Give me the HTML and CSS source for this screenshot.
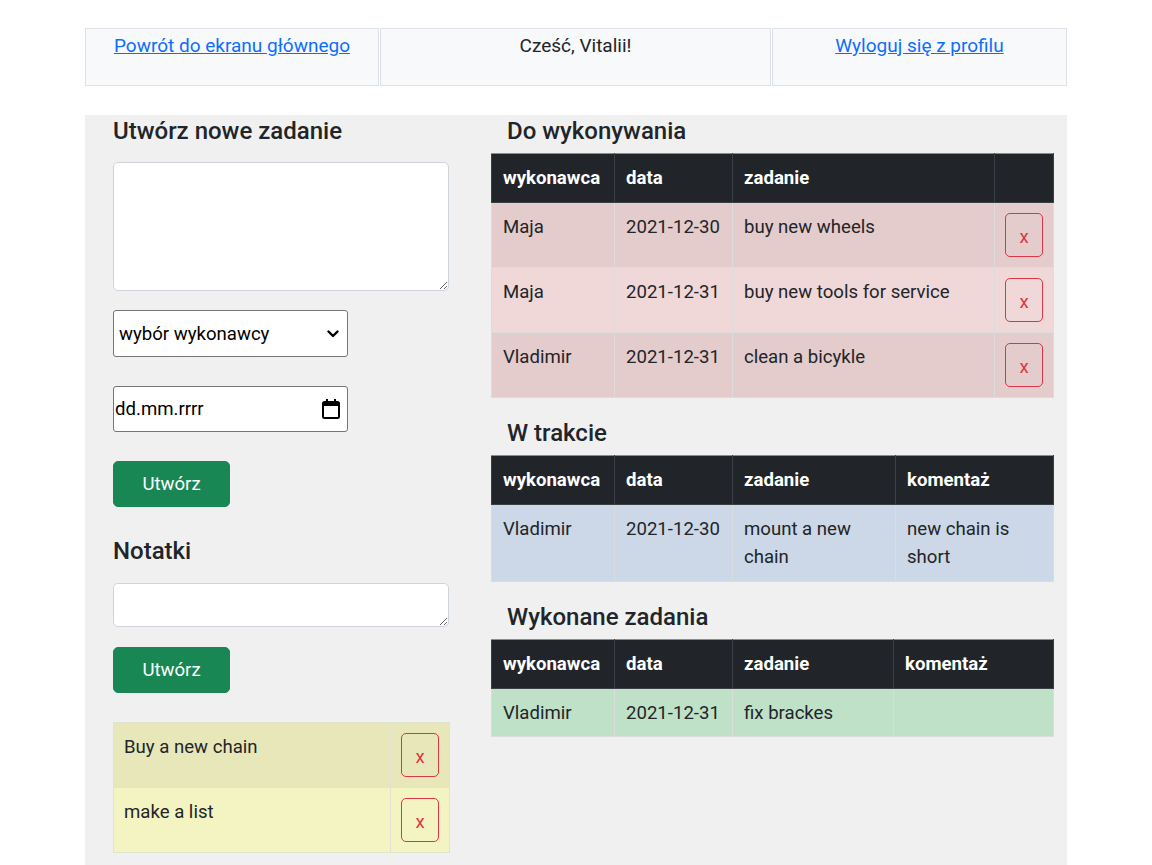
FILE: index.html
```html
<!DOCTYPE html>
<html lang="pl">
<head>
<meta charset="utf-8">
<title>Zadania</title>
<link rel="stylesheet" href="styles.css">
</head>
<body>
<div class="page">
  <div class="topbar">
    <div class="topcell"><a href="#">Powrót do ekranu głównego</a></div>
    <div class="topcell">Cześć, Vitalii!</div>
    <div class="topcell"><a href="#">Wyloguj się z profilu</a></div>
  </div>

  <div class="main">
    <section class="left">
      <h2 class="left-title">Utwórz nowe zadanie</h2>
      <textarea class="task-text"></textarea>
      <div class="select-wrap">
        <select class="select">
          <option>wybór wykonawcy</option>
        </select>
        <svg class="chevron" width="12" height="8" viewBox="0 0 12 8"><path d="M1.5 1.5 L6 6 L10.5 1.5" fill="none" stroke="#000" stroke-width="2.4" stroke-linecap="round" stroke-linejoin="round"/></svg>
      </div>
      <div class="date-input">
        <span>dd.mm.rrrr</span>
        <svg width="20" height="22" viewBox="0 0 20 22"><rect x="2" y="4" width="16" height="16" rx="1.5" fill="none" stroke="#000" stroke-width="2"/><rect x="2" y="4" width="16" height="4" fill="#000"/><rect x="5" y="1" width="2" height="4" fill="#000"/><rect x="13" y="1" width="2" height="4" fill="#000"/></svg>
      </div>
      <button class="btn-create first">Utwórz</button>

      <h2 class="left-title notes-title">Notatki</h2>
      <textarea class="note-text"></textarea>
      <button class="btn-create second">Utwórz</button>

      <table class="notes">
        <tr class="note-a"><td class="note-main">Buy a new chain</td><td class="note-act"><button class="btn-x">x</button></td></tr>
        <tr class="note-b"><td class="note-main">make a list</td><td class="note-act"><button class="btn-x">x</button></td></tr>
      </table>
    </section>

    <section class="right">
      <h3 class="sec-title">Do wykonywania</h3>
      <table class="tbl todo">
        <colgroup><col class="c1"><col class="c2"><col class="c3a"><col class="c4a"></colgroup>
        <thead><tr><th>wykonawca</th><th>data</th><th>zadanie</th><th></th></tr></thead>
        <tbody>
          <tr class="r-dark"><td>Maja</td><td>2021-12-30</td><td>buy new wheels</td><td class="act"><button class="btn-x">x</button></td></tr>
          <tr class="r-light"><td>Maja</td><td>2021-12-31</td><td>buy new tools for service</td><td class="act"><button class="btn-x">x</button></td></tr>
          <tr class="r-dark"><td>Vladimir</td><td>2021-12-31</td><td>clean a bicykle</td><td class="act"><button class="btn-x">x</button></td></tr>
        </tbody>
      </table>

      <h3 class="sec-title sec-gap">W trakcie</h3>
      <table class="tbl progress">
        <colgroup><col class="c1"><col class="c2"><col class="c3b"><col class="c4b"></colgroup>
        <thead><tr><th>wykonawca</th><th>data</th><th>zadanie</th><th>komentaż</th></tr></thead>
        <tbody>
          <tr><td>Vladimir</td><td>2021-12-30</td><td>mount a new chain</td><td>new chain is short</td></tr>
        </tbody>
      </table>

      <h3 class="sec-title sec-gap">Wykonane zadania</h3>
      <table class="tbl done">
        <colgroup><col class="c1"><col class="c2"><col class="c3c"><col class="c4c"></colgroup>
        <thead><tr><th>wykonawca</th><th>data</th><th>zadanie</th><th>komentaż</th></tr></thead>
        <tbody>
          <tr><td>Vladimir</td><td>2021-12-31</td><td>fix brackes</td><td></td></tr>
        </tbody>
      </table>
    </section>
  </div>
</div>
</body>
</html>
```

FILE: styles.css
```css
* { box-sizing: border-box; }

body {
  margin: 0;
  font-family: Roboto, "Noto Sans", sans-serif;
  font-size: 18.6px;
  color: #212529;
  background: #fff;
}

.page {
  width: 982px;
  margin: 0 auto;
  padding-top: 28px;
}

.topbar {
  display: grid;
  grid-template-columns: 294px 391px 295px;
  column-gap: 1px;
  font-size: 19px;
}

.topcell {
  height: 58px;
  border: 1px solid #dee2e6;
  background: #f8f9fa;
  text-align: center;
  padding-top: 3px;
  line-height: 27px;
}

.topcell a { color: #0d6efd; text-decoration: underline; }

.main {
  margin-top: 29px;
  background: #f0f0f0;
  display: grid;
  grid-template-columns: 336px 562px;
  column-gap: 42px;
  padding: 0 14px 20px 28px;
  min-height: 760px;
}

.left { display: flex; flex-direction: column; align-items: flex-start; }

.left-title {
  margin: 2px 0 0;
  font-size: 24px;
  font-weight: 500;
  line-height: 29px;
}

.task-text, .note-text {
  display: block;
  width: 336px;
  background: #fff;
  border: 1px solid #ced4da;
  border-radius: 5px;
  font: inherit;
  padding: 6px 12px;
}

.task-text { height: 129px; margin-top: 16px; }

.select-wrap {
  position: relative;
  margin-top: 19px;
  width: 235px;
  height: 47px;
}

.select {
  appearance: none;
  -webkit-appearance: none;
  width: 100%;
  height: 100%;
  border: 1px solid #767676;
  border-radius: 3px;
  background: #fff;
  font: inherit;
  color: #000;
  padding: 0 0 0 5px;
}

.chevron { position: absolute; right: 9px; top: 20px; pointer-events: none; }

.date-input {
  margin-top: 29px;
  width: 235px;
  height: 46px;
  border: 1px solid #767676;
  border-radius: 3px;
  background: #fff;
  color: #000;
  display: flex;
  align-items: center;
  justify-content: space-between;
  padding: 0 6px 0 1px;
}

.date-input svg { display: block; }

.btn-create {
  width: 117px;
  height: 46px;
  background: #198754;
  border: 1px solid #198754;
  border-radius: 5px;
  color: #fff;
  font: inherit;
  padding: 0;
}

.btn-create.first { margin-top: 29px; }

.notes-title { margin-top: 30px; }

.note-text { height: 44px; margin-top: 17px; }

.btn-create.second { margin-top: 20px; }

.notes {
  margin-top: 29px;
  width: 336px;
  border-collapse: collapse;
  table-layout: fixed;
}

.notes td {
  border: 1px solid #e2e2d0;
  padding: 10px;
  line-height: 28px;
  vertical-align: top;
  height: 65px;
}

.note-main { width: 277px; }
.note-act { width: 59px; }

.note-a td { background: #e8e7b9; }
.note-b td { background: #f4f4c3; }

.btn-x {
  display: block;
  width: 38px;
  height: 44px;
  border: 1px solid #dc3545;
  border-radius: 5px;
  background: transparent;
  color: #dc3545;
  font: inherit;
  padding: 3px 0 0;
  line-height: 28px;
}

.right { display: flex; flex-direction: column; }

.sec-title {
  margin: 2px 0 0 16px;
  font-size: 24px;
  font-weight: 500;
  line-height: 29px;
}

.sec-gap { margin-top: 21px; }

.tbl {
  margin-top: 7px;
  width: 562px;
  border-collapse: collapse;
  table-layout: fixed;
}

.c1 { width: 123px; }
.c2 { width: 118px; }
.c3a { width: 262px; }
.c4a { width: 59px; }
.c3b { width: 163px; }
.c4b { width: 158px; }
.c3c { width: 161px; }
.c4c { width: 160px; }

.tbl th, .tbl td {
  line-height: 28px;
  vertical-align: top;
  text-align: left;
}

.tbl th {
  padding: 10px 11px;
  background: #212529;
  color: #fff;
  font-weight: 700;
  border: 1px solid #3b4046;
  border-top-color: #8a8d90;
}

.tbl td {
  padding: 10px 11px;
  border: 1px solid #dcdcdc;
}

.done td { padding-bottom: 9px; }

.tbl td.act { padding: 10px; }

.todo .r-dark td { background: #e4cbcc; }
.todo .r-light td { background: #f0d7d8; }
.progress td { background: #ccd7e7; }
.done td { background: #bfe1c7; }
```
